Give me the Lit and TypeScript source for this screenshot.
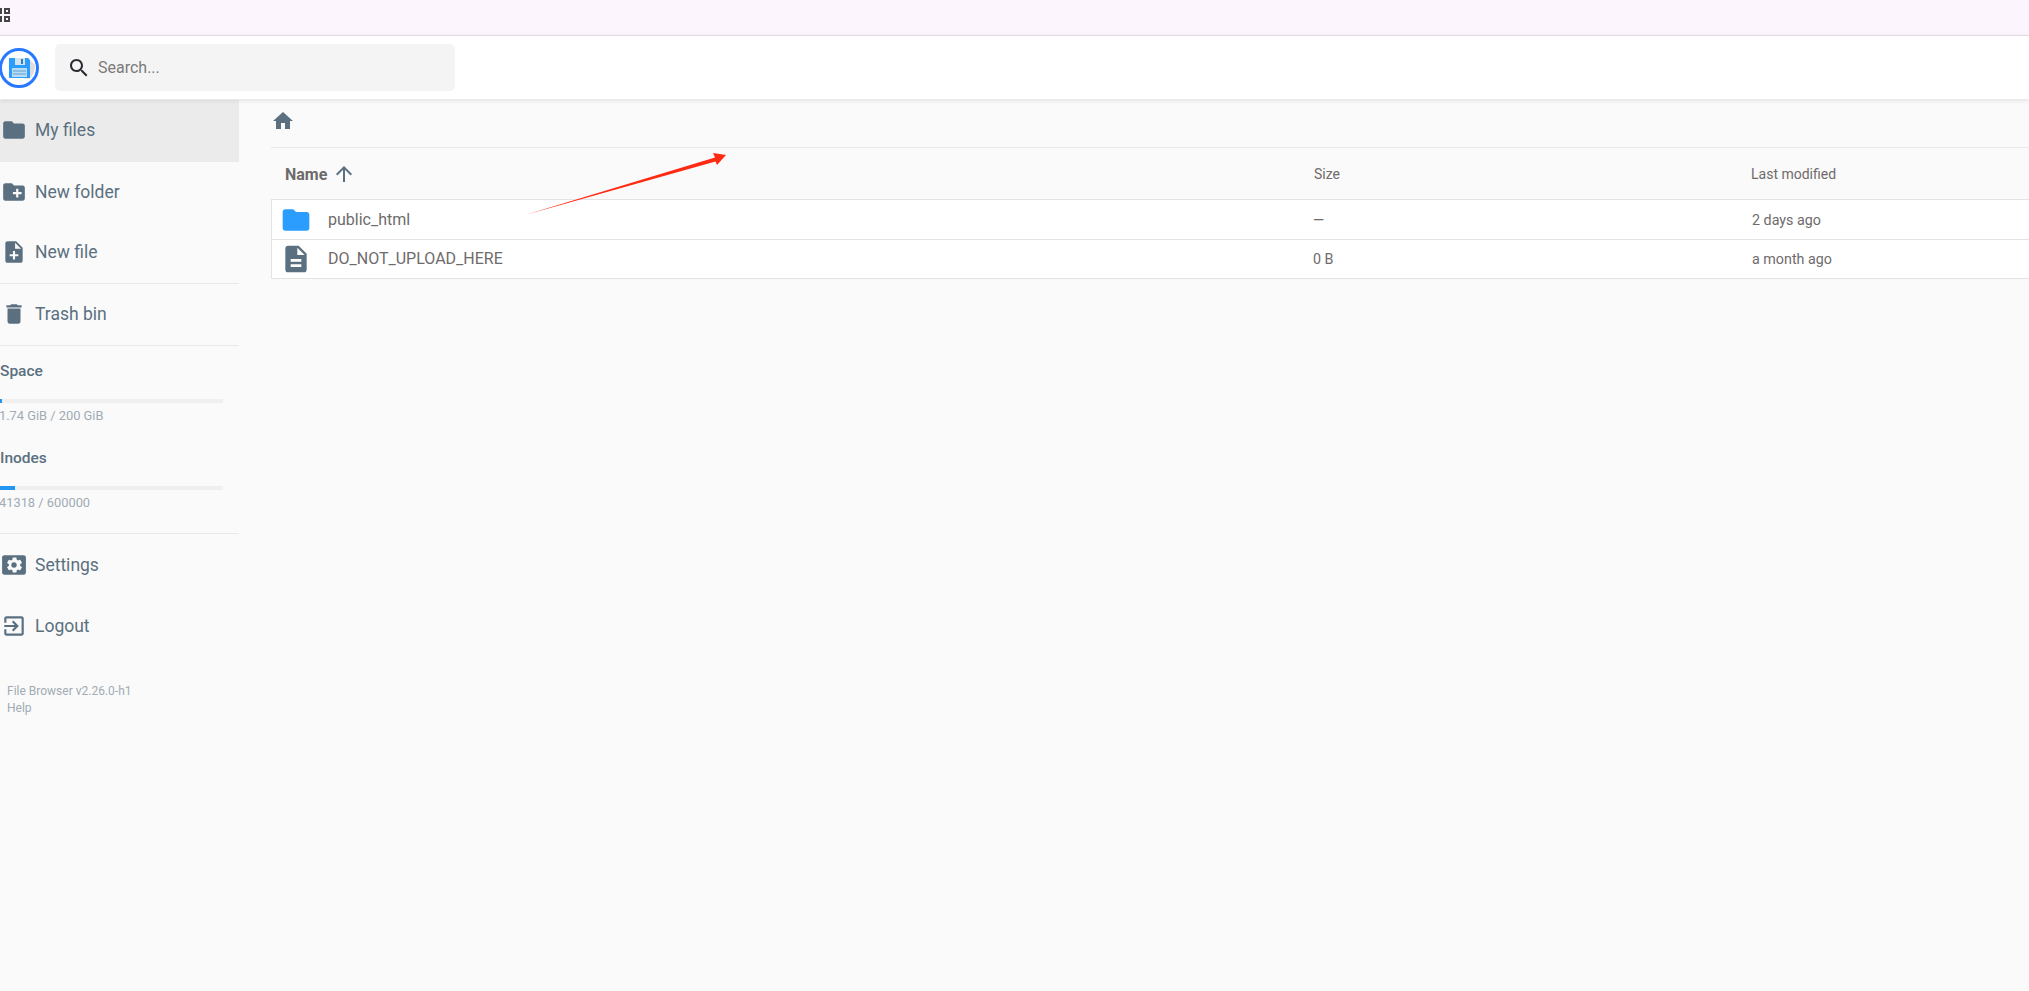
import { LitElement, html, css, svg } from "lit";
import { customElement } from "lit/decorators.js";

const icon = (d: string, cls = "") => html`<svg class="ic ${cls}" viewBox="0 0 24 24"><path d=${d}></path></svg>`;
const P = {
  folder: "M10 4H4c-1.1 0-2 .9-2 2v12c0 1.1.9 2 2 2h16c1.1 0 2-.9 2-2V8c0-1.1-.9-2-2-2h-8l-2-2z",
  newFolder: "M20 6h-8l-2-2H4c-1.11 0-2 .89-2 2v12c0 1.11.89 2 2 2h16c1.11 0 2-.89 2-2V8c0-1.11-.89-2-2-2zm-1 8h-3v3h-2v-3h-3v-2h3V9h2v3h3v2z",
  noteAdd: "M14 2H6c-1.1 0-2 .9-2 2v16c0 1.1.89 2 1.99 2H18c1.1 0 2-.9 2-2V8l-6-6zm2 14h-3v3h-2v-3H8v-2h3v-3h2v3h3v2zm-3-7V3.5L18.5 9H13z",
  del: "M6 19c0 1.1.9 2 2 2h8c1.1 0 2-.9 2-2V7H6v12zM19 4h-3.5l-1-1h-5l-1 1H5v2h14V4z",
  settings: "M21 3H3c-1.11 0-2 .89-2 2v14c0 1.11.89 2 2 2h18c1.11 0 2-.89 2-2V5c0-1.11-.89-2-2-2zm-3.25 9c0 .23-.02.46-.05.68l1.48 1.16c.13.11.17.3.08.45l-1.4 2.42c-.09.15-.27.21-.43.15l-1.74-.7c-.36.28-.76.51-1.18.69l-.26 1.85c-.03.17-.18.3-.35.3h-2.8c-.17 0-.32-.13-.35-.29l-.26-1.85c-.43-.18-.82-.41-1.18-.69l-1.74.7c-.16.06-.34 0-.43-.15l-1.4-2.42c-.09-.15-.05-.34.08-.45l1.48-1.16c-.03-.23-.05-.46-.05-.69 0-.23.02-.46.05-.68l-1.48-1.16c-.13-.11-.17-.3-.08-.45l1.4-2.42c.09-.15.27-.21.43-.15l1.74.7c.36-.28.76-.51 1.18-.69l.26-1.85c.03-.17.18-.3.35-.3h2.8c.17 0 .32.13.35.29l.26 1.85c.43.18.82.41 1.18.69l1.74-.7c.16-.06.34 0 .43.15l1.4 2.42c.09.15.05.34-.08.45l-1.48 1.16c.03.23.05.46.05.69zM12 9.5a2.5 2.5 0 1 0 0 5 2.5 2.5 0 0 0 0-5z",
  logout: "M10.09 15.59 11.5 17l5-5-5-5-1.41 1.41L12.67 11H3v2h9.67l-2.58 2.59zM19 3H5c-1.11 0-2 .9-2 2v4h2V5h14v14H5v-4H3v4c0 1.1.89 2 2 2h14c1.1 0 2-.9 2-2V5c0-1.1-.9-2-2-2z",
  home: "M10 20v-6h4v6h5v-8h3L12 3 2 12h3v8z",
  up: "M4 12l1.41 1.41L11 7.83V20h2V7.83l5.58 5.59L20 12l-8-8-8 8z",
  search: "M15.5 14h-.79l-.28-.27C15.41 12.59 16 11.11 16 9.5 16 5.91 13.09 3 9.5 3S3 5.91 3 9.5 5.91 16 9.5 16c1.61 0 3.09-.59 4.23-1.57l.27.28v.79l5 4.99L20.49 19l-4.99-5zm-6 0C7.01 14 5 11.99 5 9.5S7.01 5 9.5 5 14 7.01 14 9.5 11.99 14 9.5 14z",
  doc: "M14 2H6c-1.1 0-2 .9-2 2v16c0 1.1.89 2 1.99 2H18c1.1 0 2-.9 2-2V8l-6-6zm2 16H8v-2h8v2zm0-4H8v-2h8v2zm-3-5V3.5L18.5 9H13z",
};

@customElement("app-root")
export class AppRoot extends LitElement {
  static styles = css`
    :host { display: block; position: relative; width: 2029px; height: 991px; overflow: hidden; background: #fafafa; font-family: Roboto, "Liberation Sans", sans-serif; color: #546e7a; }
    * { box-sizing: border-box; }
    .ic { display: block; width: 24px; height: 24px; fill: currentColor; flex: none; }
    .topbar { height: 36px; background: #fdf5fe; border-bottom: 1px solid #e9e2ea; position: relative; }
    .apps { position: absolute; left: -4px; top: 8px; display: grid; grid-template-columns: 6px 6px; gap: 2px; }
    .apps i { width: 6px; height: 6px; border: 2px solid #444; background: #fff; display: block; }
    .header { height: 63px; background: #fff; display: flex; align-items: center; gap: 16px; box-shadow: 0 1px 5px rgba(0,0,0,.12); position: relative; z-index: 2; }
    .logo { width: 40px; height: 40px; margin-left: -1px; flex: none; display: block; }
    .search { width: 400px; height: 47px; background: #f4f4f4; border-radius: 5px; display: flex; align-items: center; padding-left: 12px; gap: 7px; font-size: 16px; color: #7b7b7b; }
    .search .ic { color: #2b2b33; }
    .body { display: flex; margin-top: 1px; }
    .side { width: 239px; flex: none; }
    .item { height: 62px; display: flex; align-items: center; gap: 8px; padding: 0 0 2px 1px; font-size: 17.5px; color: #5a7080; }
    .item .ic { width: 26px; height: 26px; color: #5a7080; }
    .item.active { background: #ebebeb; }
    .item.s { height: 60px; padding-bottom: 0; }
    .item.t { height: 61px; }
    .item.b { padding-bottom: 0; }
    .rule { height: 1px; background: #e9e9e9; }
    .quota { height: 187px; padding-top: 13px; }
    .q-label { font-size: 15.5px; font-weight: 500; line-height: 24px; color: #5a7080; }
    .bar { width: 223px; height: 4px; background: #efefef; margin-top: 16px; }
    .bar div { height: 100%; background: #2196f3; }
    .q-text { font-size: 12.85px; line-height: 18px; color: #9fabb5; margin-top: 4px; height: 29px; margin-left: -1px; }
    .q2 { margin-top: 10px; }
    .footer { padding: 27px 0 0 7px; font-size: 12px; line-height: 17px; color: #9fabb5; }
    .main { flex: 1; padding: 0 0 0 32px; min-width: 0; }
    .crumbs { height: 48px; border-bottom: 1px solid #e9e9e9; padding: 9px 0 0 0; color: #5a7080; }
    .cols { display: grid; grid-template-columns: 1043px 437px 1fr; align-items: center; }
    .head { height: 51px; font-size: 14px; color: #6f6b6b; padding-top: 1px; }
    .head .c1 { padding-left: 14px; display: flex; align-items: center; gap: 5px; font-size: 16px; font-weight: 700; color: #6d6a6a; }
    .head .c1 .ic { width: 24px; height: 24px; color: #5a7080; }
    .rows { background: #fff; border: 1px solid #e3e3e3; border-right: 0; }
    .row { height: 39px; font-size: 16px; color: #6f6b6b; grid-template-columns: 1041px 437px 1fr; }
    .row + .row { border-top: 1px solid #e3e3e3; padding-bottom: 1px; }
    .name { display: flex; align-items: center; gap: 16px; padding-left: 8px; }
    .name .ic { width: 32px; height: 32px; color: #5a7080; }
    .name .ic.blue { color: #2a9dff; }
    .row .c2 { font-size: 14.3px; }
    .row .c3 { padding-left: 2px; font-size: 14.3px; }
    .arrow { position: absolute; left: 0; top: 0; pointer-events: none; z-index: 3; }
  `;

  render() {
    return html`
      <div class="topbar"><div class="apps"><i></i><i></i><i></i><i></i></div></div>
      <div class="header">
        <svg class="logo" viewBox="0 0 40 40">
          <circle cx="20" cy="20" r="18.5" fill="#fff" stroke="#2979ff" stroke-width="3"></circle>
          <path d="M28 9l8 8a17 17 0 0 1-6 14L10 28z" fill="#ddd"></path>
          <path d="M10 10h19l2 2v18H10z" fill="#2a9dff"></path>
          <path d="M16 10h10v7H16z" fill="#cfe3f5"></path><path d="M22 11h2v5h-2z" fill="#3a7bb0"></path>
          <path d="M13 20h15v9H13z" fill="#b9dcf5"></path>
          <path d="M14 23h13M14 26h13" stroke="#5f9fd0" stroke-width="1"></path>
        </svg>
        <div class="search">${icon(P.search)}<span>Search...</span></div>
      </div>
      <div class="body">
        <nav class="side">
          <div class="item active">${icon(P.folder)}<span>My files</span></div>
          <div class="item s">${icon(P.newFolder)}<span>New folder</span></div>
          <div class="item t">${icon(P.noteAdd)}<span>New file</span></div>
          <div class="rule"></div>
          <div class="item t">${icon(P.del)}<span>Trash bin</span></div>
          <div class="rule"></div>
          <div class="quota">
            <div class="q-label">Space</div>
            <div class="bar"><div style="width:1%"></div></div>
            <div class="q-text">1.74 GiB / 200 GiB</div>
            <div class="q-label q2">Inodes</div>
            <div class="bar"><div style="width:6.9%"></div></div>
            <div class="q-text">41318 / 600000</div>
          </div>
          <div class="rule"></div>
          <div class="item t b">${icon(P.settings)}<span>Settings</span></div>
          <div class="item t b">${icon(P.logout)}<span>Logout</span></div>
          <div class="footer">File Browser v2.26.0-h1<br />Help</div>
        </nav>
        <main class="main">
          <div class="crumbs">${icon(P.home)}</div>
          <div class="cols head"><div class="c1">Name ${icon(P.up)}</div><div>Size</div><div>Last modified</div></div>
          <div class="rows">
            <div class="cols row"><div class="name">${icon(P.folder, "blue")}<span>public_html</span></div><div class="c2">—</div><div class="c3">2 days ago</div></div>
            <div class="cols row"><div class="name">${icon(P.doc)}<span>DO_NOT_UPLOAD_HERE</span></div><div class="c2">0 B</div><div class="c3">a month ago</div></div>
          </div>
        </main>
      </div>
      <svg class="arrow" width="2029" height="991" viewBox="0 0 2029 991">
        ${svg`<path d="M525 215L715 157.5L713 153L726 155L717 165L715.5 161.5Z" fill="#ff2a12"></path>`}
      </svg>
    `;
  }
}
